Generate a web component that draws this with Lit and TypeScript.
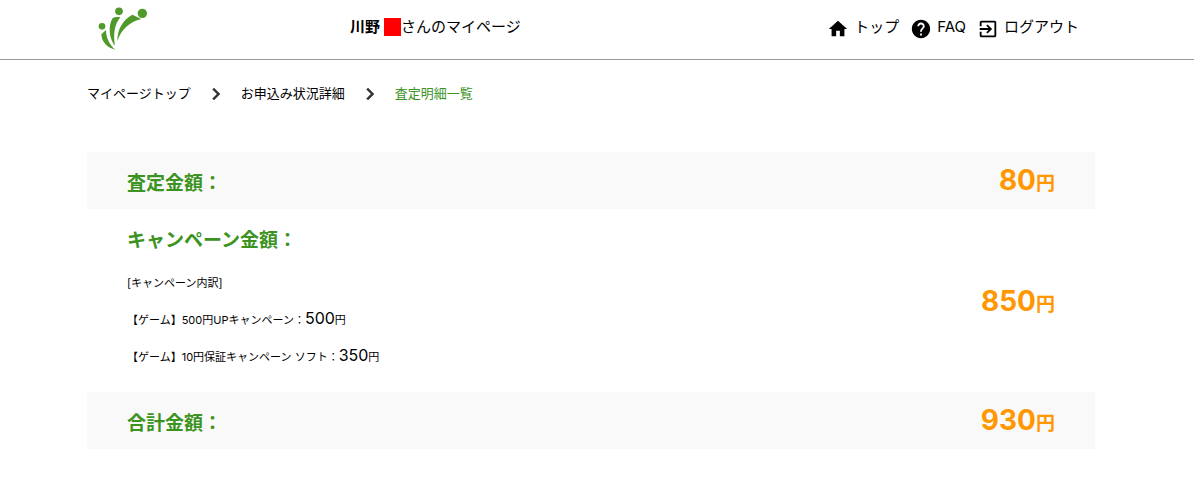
import { LitElement, html, css, svg } from "lit";
import { customElement, property } from "lit/decorators.js";

const ICONS = {
  home: svg`<path d="M10 20v-6h4v6h5v-8h3L12 3 2 12h3v8z"/>`,
  help: svg`<path d="M12 2C6.48 2 2 6.48 2 12s4.48 10 10 10 10-4.48 10-10S17.52 2 12 2zm1 17h-2v-2h2v2zm2.07-7.75l-.9.92C13.45 12.9 13 13.5 13 15h-2v-.5c0-1.1.45-2.1 1.17-2.83l1.24-1.26c.37-.36.59-.86.59-1.41 0-1.1-.9-2-2-2s-2 .9-2 2H8c0-2.21 1.79-4 4-4s4 1.79 4 4c0 .88-.36 1.68-.93 2.25z"/>`,
  exit: svg`<path d="M10.09 15.59L11.5 17l5-5-5-5-1.41 1.41L12.67 11H3v2h9.67l-2.58 2.59zM19 3H5c-1.11 0-2 .9-2 2v4h2V5h14v14H5v-4H3v4c0 1.1.89 2 2 2h14c1.1 0 2-.9 2-2V5c0-1.1-.9-2-2-2z"/>`,
  chevron: svg`<path d="M10 6L8.59 7.41 13.17 12l-4.58 4.59L10 18l6-6z" stroke="currentColor" stroke-width="0.5"/>`,
};

interface Campaign {
  name: string;
  amount: number;
}

@customElement("mp-icon")
class MpIcon extends LitElement {
  static styles = css`
    :host { display: inline-flex; width: 24px; height: 24px; }
    .icon { width: 100%; height: 100%; fill: currentColor; }
  `;
  @property() name: keyof typeof ICONS = "home";
  render() {
    return html`<svg class="icon" viewBox="0 0 24 24" aria-hidden="true">${ICONS[this.name]}</svg>`;
  }
}

@customElement("mp-amount")
class MpAmount extends LitElement {
  static styles = css`
    :host {
      display: flex;
      align-items: baseline;
      color: #ff9800;
      font-size: 19px;
      font-weight: 700;
      line-height: 16px;
      white-space: nowrap;
    }
    .figure { font-size: 28px; line-height: 24px; }
  `;
  @property({ type: Number }) value = 0;
  render() {
    return html`<span class="figure">${this.value}</span><span>円</span>`;
  }
}

@customElement("app-root")
class AppRoot extends LitElement {
  static styles = css`
    :host {
      display: block;
      background: #fff;
      color: #000;
      font-family: Inter, "Noto Sans CJK JP", sans-serif;
      font-size: 15px;
    }
    a { color: inherit; text-decoration: none; }
    .header {
      display: flex;
      align-items: center;
      height: 59px;
      padding: 0 115px 0 98px;
      border-bottom: 1px solid #999;
    }
    .logo { display: flex; flex: 0 0 252px; margin-bottom: 2px; }
    .mark { width: 50px; height: 44px; fill: #4f9a2a; }
    .owner { display: flex; align-items: center; flex: 1; margin: 0 0 6px; line-height: 24px; white-space: nowrap; }
    .mask { width: 17px; height: 18px; margin-left: 4px; background: #f00; }
    .menu { display: flex; gap: 11px; margin-bottom: 4px; line-height: 22px; white-space: nowrap; }
    .item { display: flex; align-items: flex-start; gap: 5px; }
    .glyph { width: 22px; height: 22px; margin-top: 2px; }
    .content { padding: 0 99px 0 87px; }
    .crumbs {
      display: flex;
      align-items: center;
      gap: 13px;
      padding-top: 21px;
      margin-bottom: 46px;
      font-size: 13px;
      line-height: 25px;
      white-space: nowrap;
    }
    .sep { color: #333; }
    .current { color: #3c931f; }
    .row {
      display: flex;
      align-items: center;
      justify-content: space-between;
      padding: 16px 40px;
    }
    .shaded { align-items: flex-start; padding-bottom: 9px; background: #f9f9f9; }
    .title { margin: 0; color: #3c931f; font-size: 19px; font-weight: 700; line-height: 32px; }
    .lines { margin: 0; padding: 0; list-style: none; font-size: 11px; }
    .caption { margin: 8px 0 0; font-size: 11px; line-height: 37px; }
    .line { line-height: 37px; }
    .sum { font-size: 16px; line-height: 24px; }
  `;

  private campaigns: Campaign[] = [
    { name: "【ゲーム】500円UPキャンペーン", amount: 500 },
    { name: "【ゲーム】10円保証キャンペーン ソフト", amount: 350 },
  ];

  render() {
    return html`
      <header class="header">
        <a class="logo" href="#" aria-label="マイページ">
          <svg class="mark" viewBox="54 21 150 132" aria-hidden="true">
            <circle cx="66" cy="79" r="10" />
            <circle cx="117" cy="34" r="11.5" />
            <circle cx="187" cy="40" r="14" />
            <path d="M64 103 78 90C78 112 88 134 106 149 84 144 65 128 64 103z" />
            <path d="M121 52C104 72 99 102 105 137 88 118 83 78 98 54 105 50 113 50 121 52z" />
            <path d="M112 123C112 88 127 61 157 44L184 57C148 66 124 88 112 123z" />
          </svg>
        </a>
        <p class="owner"><b>川野</b><span class="mask"></span>さんのマイページ</p>
        <nav class="menu">
          <a class="item" href="#"><mp-icon class="glyph" name="home"></mp-icon>トップ</a>
          <a class="item" href="#"><mp-icon class="glyph" name="help"></mp-icon>FAQ</a>
          <a class="item" href="#"><mp-icon class="glyph" name="exit"></mp-icon>ログアウト</a>
        </nav>
      </header>
      <main class="content">
        <nav class="crumbs">
          <a href="#">マイページトップ</a>
          <mp-icon class="sep" name="chevron"></mp-icon>
          <a href="#">お申込み状況詳細</a>
          <mp-icon class="sep" name="chevron"></mp-icon>
          <span class="current" aria-current="page">査定明細一覧</span>
        </nav>
        <section class="row shaded">
          <h2 class="title">査定金額：</h2>
          <mp-amount .value=${80}></mp-amount>
        </section>
        <section class="row">
          <div>
            <h2 class="title">キャンペーン金額：</h2>
            <p class="caption">[キャンペーン内訳]</p>
            <ul class="lines">
              ${this.campaigns.map(
                (c) => html`<li class="line">${c.name}：<span class="sum">${c.amount}</span>円</li>`
              )}
            </ul>
          </div>
          <mp-amount .value=${850}></mp-amount>
        </section>
        <section class="row shaded">
          <h2 class="title">合計金額：</h2>
          <mp-amount .value=${930}></mp-amount>
        </section>
      </main>
    `;
  }
}
